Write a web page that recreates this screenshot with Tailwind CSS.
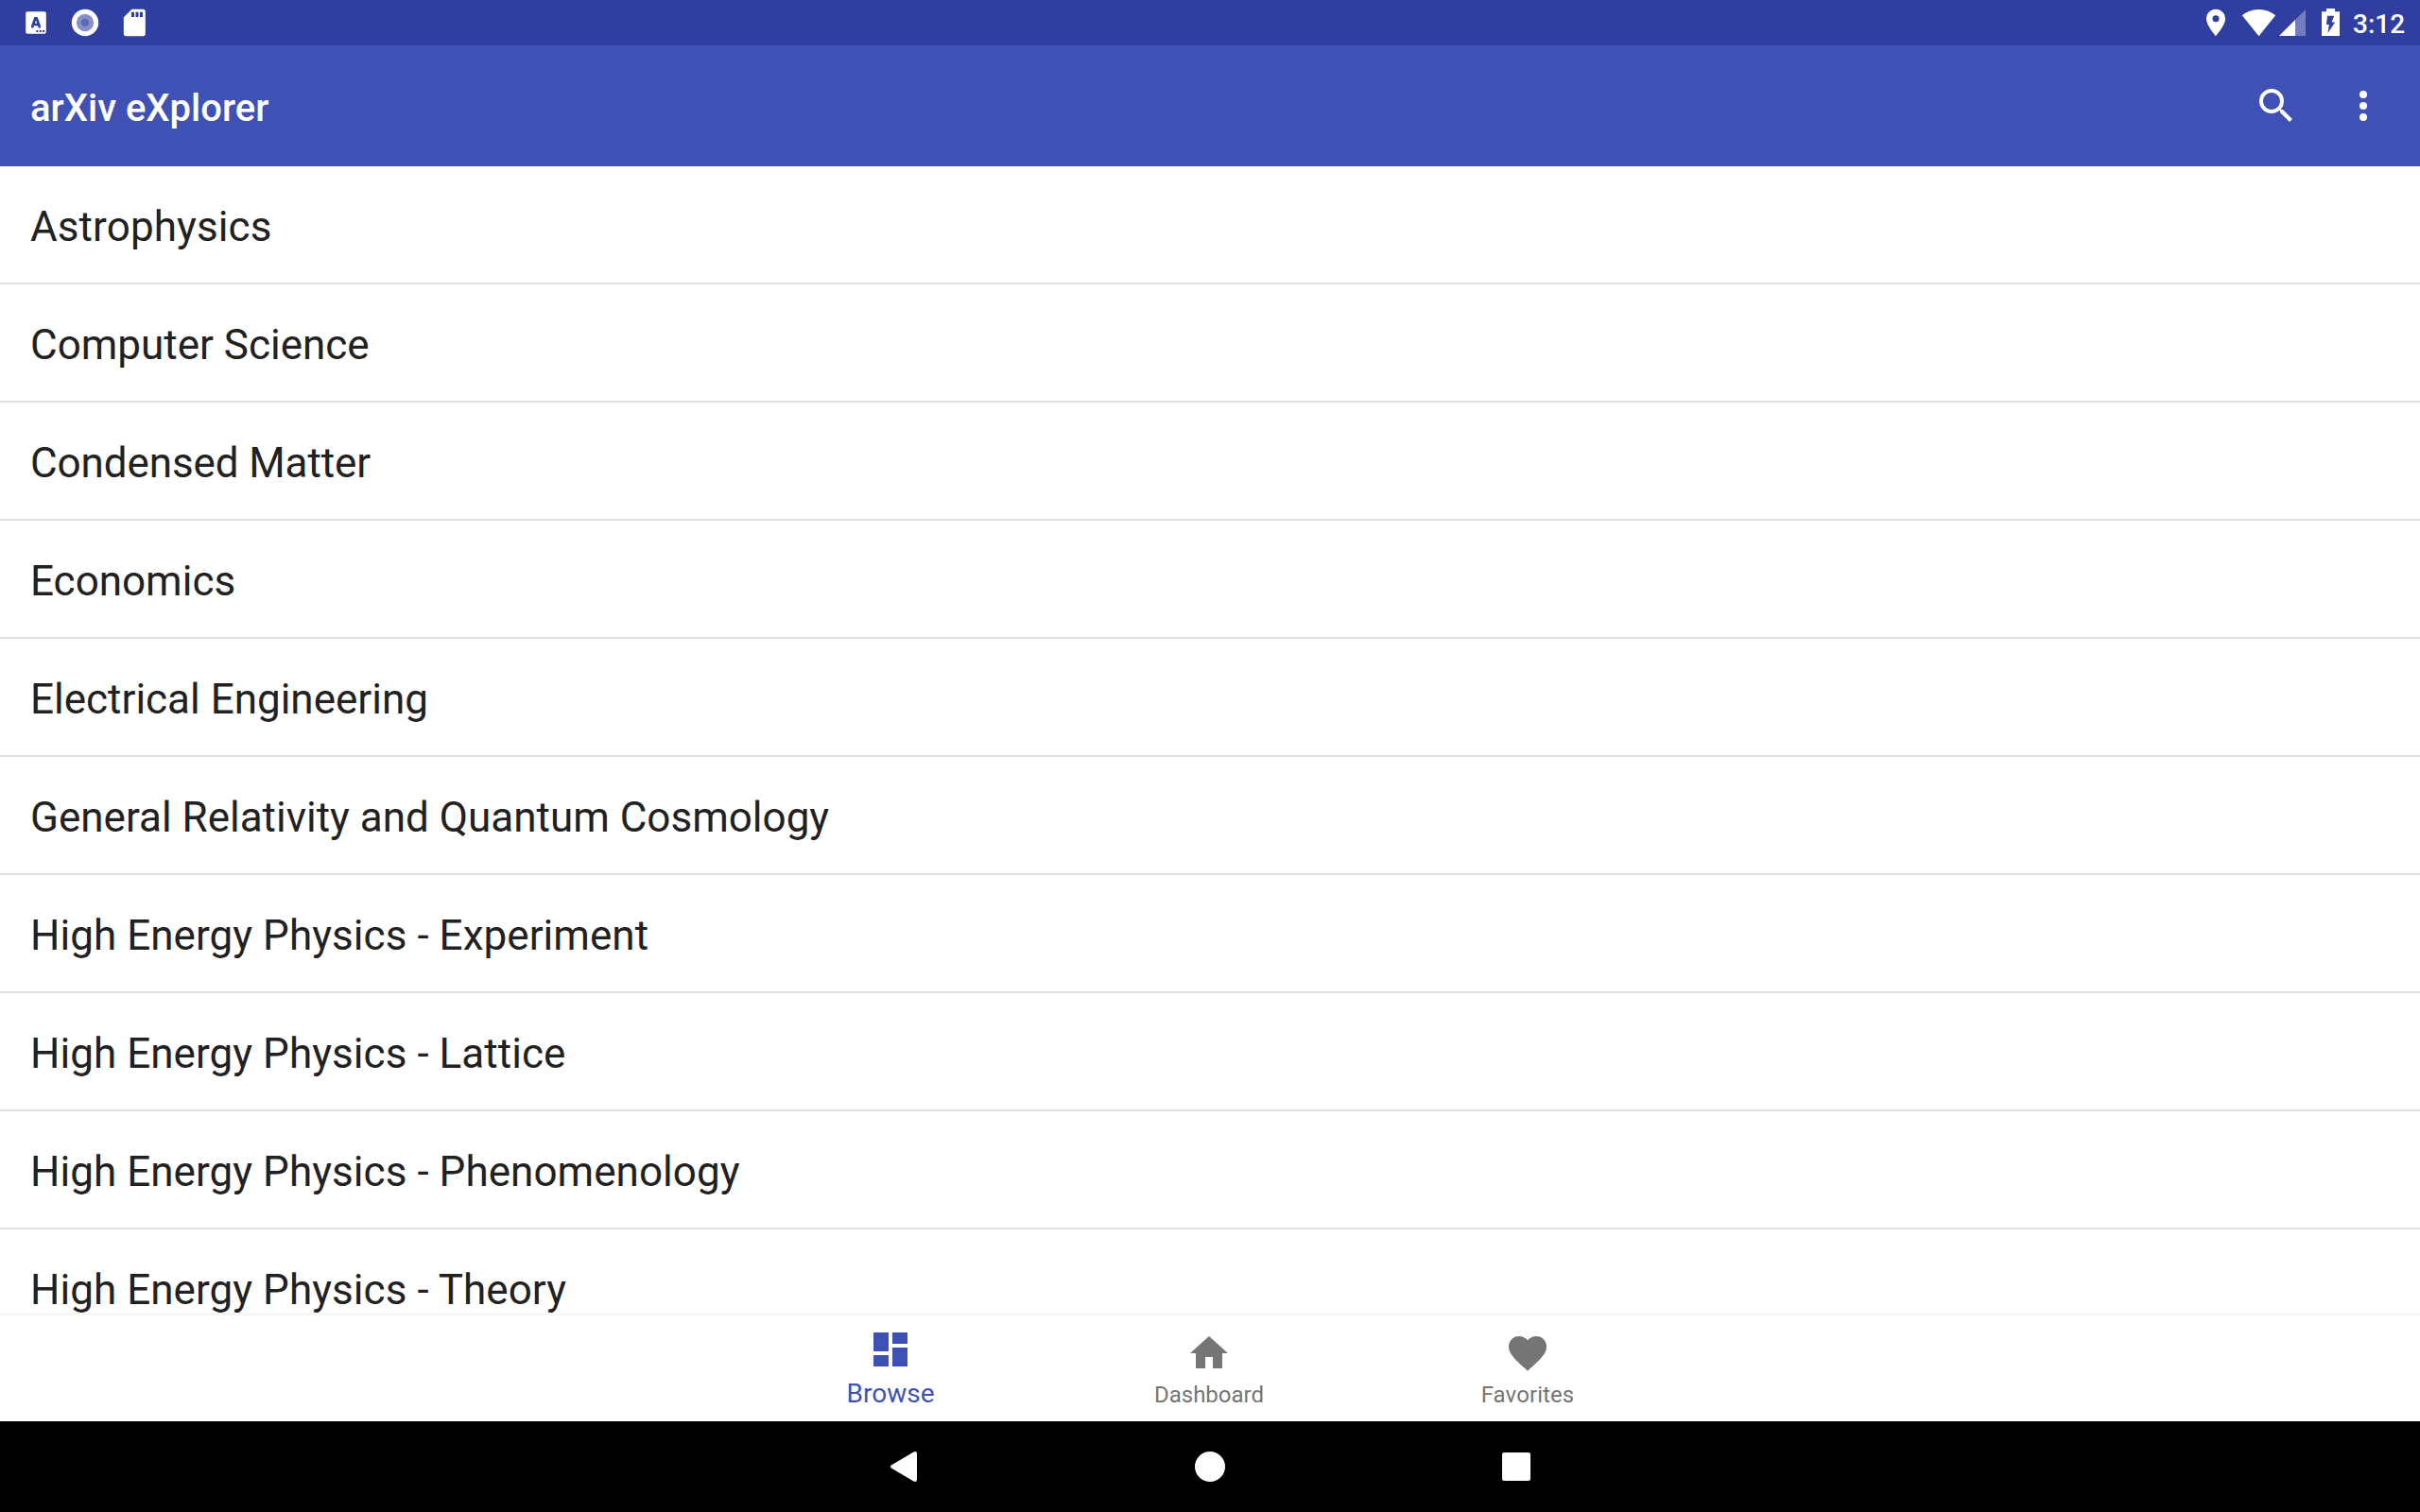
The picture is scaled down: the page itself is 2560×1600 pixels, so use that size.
<!DOCTYPE html>
<html lang="en">
<head>
<meta charset="utf-8">
<title>arXiv eXplorer</title>
<script src="https://cdn.jsdelivr.net/npm/@tailwindcss/browser@4"></script>
</head>
<body class="w-[2560px] h-[1600px] overflow-hidden bg-white font-[Roboto,sans-serif] flex flex-col">
  <!-- Status bar -->
  <div class="h-12 shrink-0 bg-[#303f9f] flex items-center text-white">
    <svg class="w-[160px] h-12" viewBox="0 0 160 48" fill="#fff">
      <rect x="27.200" y="12.200" width="21.600" height="23.600" rx="2"/>
      <path d="M34.200 28.300L37.300 19.300h1.400l3.100 9M35.500 26h5" fill="none" stroke="#303f9f" stroke-width="2.700" stroke-linecap="round"/>
      <path d="M38.300 32v2h2v-2zM41.800 32v2h2v-2zM45 32v2h2v-2z" fill="#303f9f"/>
      <circle cx="90" cy="24" r="14.200"/>
      <circle cx="90" cy="24" r="9.200" fill="#8790ca"/>
      <circle cx="90" cy="24" r="4.200" fill="#5f6ab5"/>
      <path fill-rule="evenodd" d="M139.500 9.700h11.500a2.800 2.800 0 0 1 2.800 2.800v23a2.800 2.800 0 0 1-2.800 2.800h-17.400a2.800 2.800 0 0 1-2.800-2.800l.1-17.300zM139 12.800v5.200h3v-5.200zM143.500 12.800v5.200h3v-5.200zM148 12.800v5.200h3v-5.200z"/>
    </svg>
    <svg class="w-[160px] h-12 ml-auto" viewBox="0 0 160 48" fill="#fff">
      <path fill-rule="evenodd" d="M19 9.800c-5.600 0-10 4.400-10 9.900 0 7.300 10 18.400 10 18.400s10-11.100 10-18.400c0-5.500-4.400-9.900-10-9.900zm0 13.400a3.500 3.500 0 1 1 0-7 3.500 3.500 0 0 1 0 7z"/>
      <path d="M64.500 38.200L82.200 16.200C81.500 15.700 74.700 9.900 64.500 9.900S47.500 15.700 46.800 16.200z"/>
      <path d="M86 38h28V10z" fill-opacity=".32"/>
      <path d="M86 38h17V21z"/>
      <path fill-rule="evenodd" d="M136 9h9v3.200h5V38h-19V12.200h5zM137 16.700l-1 9.300h2.800l-1.300 9 7.700-11.500h-3.700l2.800-6.800z"/>
    </svg>
    <div class="w-[75px] text-[28px] leading-[48px] font-medium pl-[4px] pt-[3px]">3:12</div>
  </div>
  <!-- App bar -->
  <header class="h-32 shrink-0 bg-[#3f51b5] flex items-center pl-8 pr-[36px] text-white">
    <h1 class="text-[40px] leading-[48px] font-medium pt-[5px]">arXiv eXplorer</h1>
    <svg class="w-12 h-12 ml-auto" viewBox="0 0 24 24" fill="#fff"><path d="M15.500 14h-.79l-.28-.27A6.471 6.471 0 0 0 16 9.500 6.500 6.500 0 1 0 9.500 16c1.610 0 3.090-.59 4.230-1.570l.27.28v.79l5 4.990L20.490 19l-4.990-5zm-6 0C7.010 14 5 11.990 5 9.500S7.010 5 9.500 5 14 7.010 14 9.500 11.990 14 9.500 14z"/></svg>
    <svg class="w-12 h-12 ml-[44px]" viewBox="0 0 24 24" fill="#fff"><circle cx="12" cy="6" r="2"/><circle cx="12" cy="12" r="2"/><circle cx="12" cy="18" r="2"/></svg>
  </header>
  <!-- Category list -->
  <ul class="h-[1216px] shrink-0 overflow-hidden text-[44px] leading-[52px] text-[#212121]">
    <li class="h-[125px] pl-8 pt-[38px] border-b-2 border-[#e0e0e0] tracking-[0.1px]">Astrophysics</li>
    <li class="h-[125px] pl-8 pt-[38px] border-b-2 border-[#e0e0e0]">Computer Science</li>
    <li class="h-[125px] pl-8 pt-[38px] border-b-2 border-[#e0e0e0] tracking-[-0.1px]">Condensed Matter</li>
    <li class="h-[125px] pl-8 pt-[38px] border-b-2 border-[#e0e0e0]">Economics</li>
    <li class="h-[125px] pl-8 pt-[38px] border-b-2 border-[#e0e0e0]">Electrical Engineering</li>
    <li class="h-[125px] pl-8 pt-[38px] border-b-2 border-[#e0e0e0]">General Relativity and Quantum Cosmology</li>
    <li class="h-[125px] pl-8 pt-[38px] border-b-2 border-[#e0e0e0] tracking-[0.05px]">High Energy Physics - Experiment</li>
    <li class="h-[125px] pl-8 pt-[38px] border-b-2 border-[#e0e0e0] tracking-[0.05px]">High Energy Physics - Lattice</li>
    <li class="h-[125px] pl-8 pt-[38px] border-b-2 border-[#e0e0e0] tracking-[0.05px]">High Energy Physics - Phenomenology</li>
    <li class="h-[125px] pl-8 pt-[38px] tracking-[0.05px]">High Energy Physics - Theory</li>
  </ul>
  <!-- Bottom navigation -->
  <nav class="relative h-28 shrink-0 bg-white flex pl-[773px] shadow-[0_0_6px_rgba(0,0,0,0.1)] text-[#757575]">
    <div class="w-[338px] flex flex-col items-center pt-3 text-[#3f51b5]">
      <svg class="w-12 h-12" viewBox="0 0 24 24" fill="currentColor"><path d="M3 13h8V3H3v10zm0 8h8v-6H3v6zm10 0h8V11h-8v10zm0-18v6h8V3h-8z"/></svg>
      <span class="text-[28px] leading-8 mt-[7px]">Browse</span>
    </div>
    <div class="w-[336px] flex flex-col items-center pt-4">
      <svg class="w-12 h-12" viewBox="0 0 24 24" fill="currentColor"><path d="M10 20v-6h4v6h5v-8h3L12 3 2 12h3v8z"/></svg>
      <span class="text-[24px] leading-7 mt-[6px]">Dashboard</span>
    </div>
    <div class="w-[338px] flex flex-col items-center pt-4">
      <svg class="w-12 h-12" viewBox="0 0 24 24" fill="currentColor"><path d="M12 21.350l-1.450-1.320C5.400 15.360 2 12.280 2 8.500 2 5.420 4.420 3 7.500 3c1.740 0 3.410.81 4.500 2.090C13.090 3.810 14.760 3 16.500 3 19.580 3 22 5.420 22 8.500c0 3.780-3.400 6.860-8.550 11.540L12 21.350z"/></svg>
      <span class="text-[24px] leading-7 mt-[6px] tracking-[0.1px]">Favorites</span>
    </div>
  </nav>
  <!-- System navigation -->
  <div class="h-24 shrink-0 bg-black flex items-center justify-center">
    <svg class="w-[720px] h-24" viewBox="0 0 720 96" fill="#fff">
      <path d="M23.200 46.200L46.500 32.500Q50 31 50 34.500V61.500Q50 65 46.500 63.500L23.200 49.800Q20.500 48 23.200 46.200z"/>
      <circle cx="360" cy="48" r="16"/>
      <rect x="669" y="33" width="30" height="30" rx="2"/>
    </svg>
  </div>
</body>
</html>
